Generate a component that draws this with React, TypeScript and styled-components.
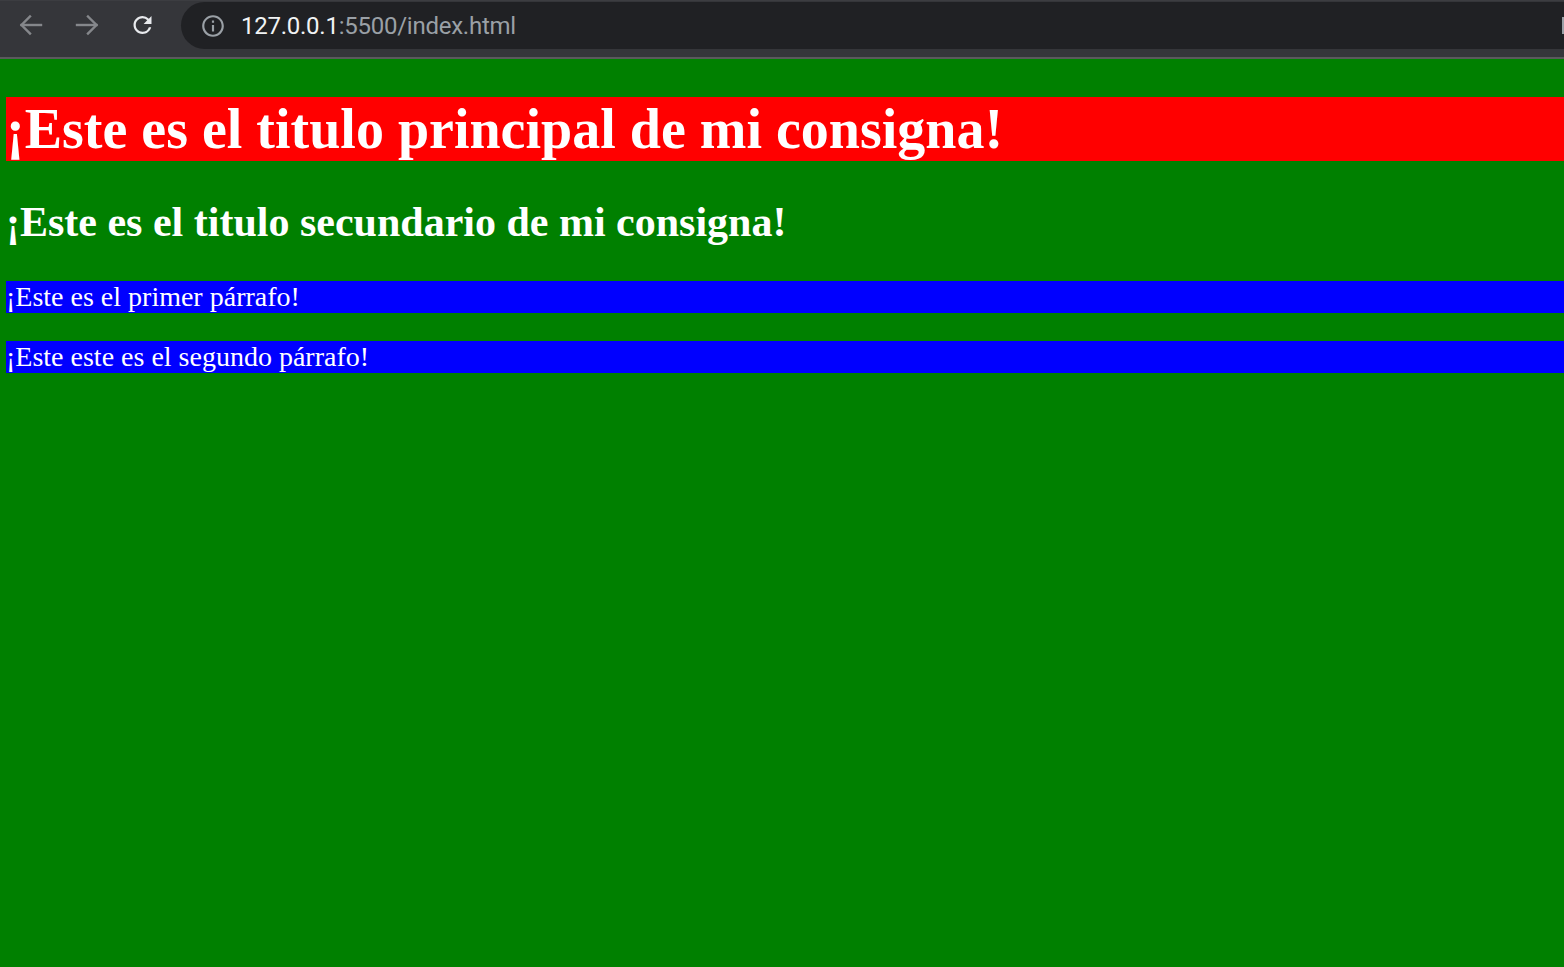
import React from "react";
import styled, { createGlobalStyle } from "styled-components";

const GlobalStyle = createGlobalStyle`
  html, body {
    margin: 0;
    padding: 0;
    height: 100%;
    overflow: hidden;
    background: #008000;
  }
  #root {
    height: 100%;
  }
`;

const Browser = styled.div`
  display: flex;
  flex-direction: column;
  height: 100vh;
  width: 100%;
`;

const Toolbar = styled.div`
  flex: 0 0 auto;
  height: 59px;
  background: #35363a;
  border-top: 1px solid #3c3d41;
  border-bottom: 2px solid #5a5a5c;
  box-sizing: border-box;
  display: flex;
  align-items: flex-start;
  overflow: hidden;
`;

const NavGroup = styled.div`
  display: flex;
  align-items: center;
  height: 48px;
  padding-left: 17px;
  gap: 29px;
`;

const NavButton = styled.span<{ $active?: boolean }>`
  display: inline-flex;
  align-items: center;
  justify-content: center;
  width: 27px;
  height: 27px;
  color: ${(p) => (p.$active ? "#e8eaed" : "#85878b")};
`;

const Omnibox = styled.div`
  flex: 0 0 auto;
  width: 1500px;
  height: 47px;
  margin-top: 1px;
  margin-left: 25px;
  background: #202124;
  border-radius: 24px;
  display: flex;
  align-items: center;
  padding-left: 19px;
  box-sizing: border-box;
`;

const InfoIcon = styled.span`
  display: inline-flex;
  color: #9aa0a6;
  margin-right: 15px;
`;

const Url = styled.span`
  font-family: Roboto, "Noto Sans", sans-serif;
  font-size: 24px;
  letter-spacing: -0.25px;
  color: #9aa0a6;
  white-space: nowrap;
`;

const Host = styled.span`
  color: #f1f3f4;
`;

const EdgeMark = styled.span`
  margin-left: auto;
  margin-right: 117px;
  width: 2px;
  height: 17px;
  background: #9aa0a6;
`;

const Page = styled.main`
  flex: 1 1 auto;
  display: flow-root;
  background: #008000;
  padding-left: 6px;
  color: #ffffff;
  font-family: "Liberation Serif", "Times New Roman", serif;
`;

const MainTitle = styled.h1`
  margin: 38px 0 37px;
  font-size: 56px;
  line-height: 64px;
  font-weight: bold;
  background: #ff0000;
`;

const SubTitle = styled.h2`
  margin: 0 0 35px;
  font-size: 42px;
  line-height: 48px;
  font-weight: bold;
`;

const Paragraph = styled.p`
  margin: 0 0 28px;
  font-size: 28px;
  line-height: 32px;
  background: #0000ff;
`;

const BackIcon = () => (
  <svg width="26" height="26" viewBox="0 0 26 26" fill="none" stroke="currentColor" strokeWidth="2.4" strokeLinecap="square">
    <path d="M23 13H3.5" />
    <path d="M12 4.5L3.5 13L12 21.5" />
  </svg>
);

const ForwardIcon = () => (
  <svg width="26" height="26" viewBox="0 0 26 26" fill="none" stroke="currentColor" strokeWidth="2.4" strokeLinecap="square">
    <path d="M3 13H22.5" />
    <path d="M14 4.5L22.5 13L14 21.5" />
  </svg>
);

const ReloadIcon = () => (
  <svg width="32" height="32" viewBox="0 0 24 24" fill="currentColor">
    <path d="M17.65 6.35A7.958 7.958 0 0 0 12 4c-4.42 0-7.99 3.58-7.99 8s3.57 8 7.99 8c3.73 0 6.84-2.55 7.73-6h-2.08A5.99 5.99 0 0 1 12 18c-3.31 0-6-2.69-6-6s2.69-6 6-6c1.66 0 3.14.69 4.22 1.78L13 11h7V4l-2.35 2.35z" />
  </svg>
);

const InfoSvg = () => (
  <svg width="26" height="26" viewBox="0 0 24 24" fill="currentColor">
    <path d="M11 7h2v2h-2zm0 4h2v6h-2zm1-9C6.48 2 2 6.48 2 12s4.48 10 10 10 10-4.48 10-10S17.52 2 12 2zm0 18c-4.41 0-8-3.59-8-8s3.59-8 8-8 8 3.59 8 8-3.59 8-8 8z" />
  </svg>
);

export default function App() {
  return (
    <>
      <GlobalStyle />
      <Browser>
        <Toolbar>
          <NavGroup>
            <NavButton>
              <BackIcon />
            </NavButton>
            <NavButton>
              <ForwardIcon />
            </NavButton>
            <NavButton $active>
              <ReloadIcon />
            </NavButton>
          </NavGroup>
          <Omnibox>
            <InfoIcon>
              <InfoSvg />
            </InfoIcon>
            <Url>
              <Host>127.0.0.1</Host>:5500/index.html
            </Url>
            <EdgeMark />
          </Omnibox>
        </Toolbar>
        <Page>
          <MainTitle>¡Este es el titulo principal de mi consigna!</MainTitle>
          <SubTitle>¡Este es el titulo secundario de mi consigna!</SubTitle>
          <Paragraph>¡Este es el primer párrafo!</Paragraph>
          <Paragraph>¡Este este es el segundo párrafo!</Paragraph>
        </Page>
      </Browser>
    </>
  );
}
